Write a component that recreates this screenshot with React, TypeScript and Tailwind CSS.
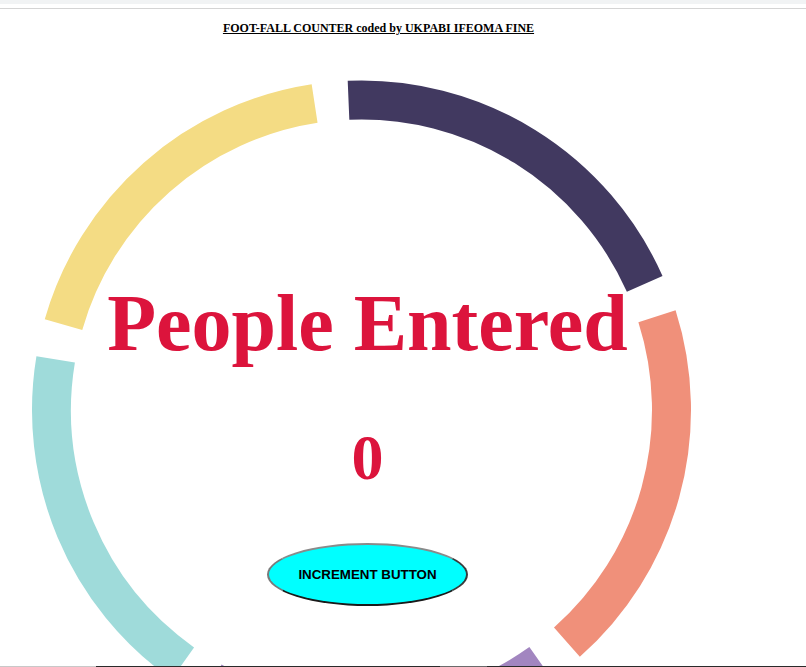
import React, { useState } from 'react';

const CX = 361.5;
const CY = 410;
const R = 310;

// angles in degrees, clockwise from 12 o'clock
const segments = [
  { from: -2.4, to: 66, color: '#413960' },
  { from: 72.4, to: 138.5, color: '#f0907a' },
  { from: 144.7, to: 208.8, color: '#a286c0' },
  { from: 215.2, to: 279.4, color: '#9fdbda' },
  { from: 286, to: 351.3, color: '#f4dc84' },
];

function point(deg: number) {
  const rad = (deg * Math.PI) / 180;
  return [CX + R * Math.sin(rad), CY - R * Math.cos(rad)];
}

function arc(from: number, to: number) {
  const [x1, y1] = point(from);
  const [x2, y2] = point(to);
  const large = to - from > 180 ? 1 : 0;
  return `M ${x1} ${y1} A ${R} ${R} 0 ${large} 1 ${x2} ${y2}`;
}

function Ring() {
  return (
    <svg className="absolute left-0 top-0" width={806} height={667} viewBox="0 0 806 667">
      {segments.map((s) => (
        <path key={s.color} d={arc(s.from, s.to)} fill="none" stroke={s.color} strokeWidth={39} />
      ))}
    </svg>
  );
}

export default function App() {
  const [count, setCount] = useState(0);

  return (
    <div className="relative w-[806px] h-[667px] overflow-hidden bg-white font-['Liberation_Serif',serif]">
      {/* browser strip */}
      <div className="h-[4px] bg-[#f1f3f4]" />
      <div className="h-[4px]" />
      <div className="h-px bg-[#d4d4d4]" />

      <Ring />

      <div className="relative flex flex-col w-[757px]">
        <h1 className="mt-[12px] text-center text-[12px] font-bold leading-[14px] text-black underline">
          FOOT-FALL COUNTER coded by UKPABI IFEOMA FINE
        </h1>
      </div>

      <main className="relative flex flex-col items-center w-[735px] mt-[248px]">
        <h2 className="text-[80px] leading-[80px] font-bold text-[#dc143c] whitespace-nowrap">People Entered</h2>
        <p className="mt-[63px] text-[64px] leading-[64px] font-bold text-[#dc143c]">{count}</p>
        <button
          onClick={() => setCount(count + 1)}
          className="mt-[53px] w-[201px] h-[63px] rounded-[50%] bg-[#00ffff] border-2 border-t-[#8a8a8a] border-l-[#7a7a7a] border-r-[#3a3a3a] border-b-[#1a1a1a] font-['Liberation_Sans',Arial,sans-serif] text-[13.33px] font-bold text-black"
        >
          INCREMENT BUTTON
        </button>
      </main>

      {/* bottom edge */}
      <div className="absolute left-0 bottom-0 flex w-full h-px">
        <div className="w-[96px] bg-[#c8c8c8]" />
        <div className="w-[344px] bg-[#2a2a2a]" />
        <div className="w-[47px] bg-[#6a6a6a]" />
        <div className="flex-1 bg-[#2a2a2a]" />
      </div>
    </div>
  );
}
